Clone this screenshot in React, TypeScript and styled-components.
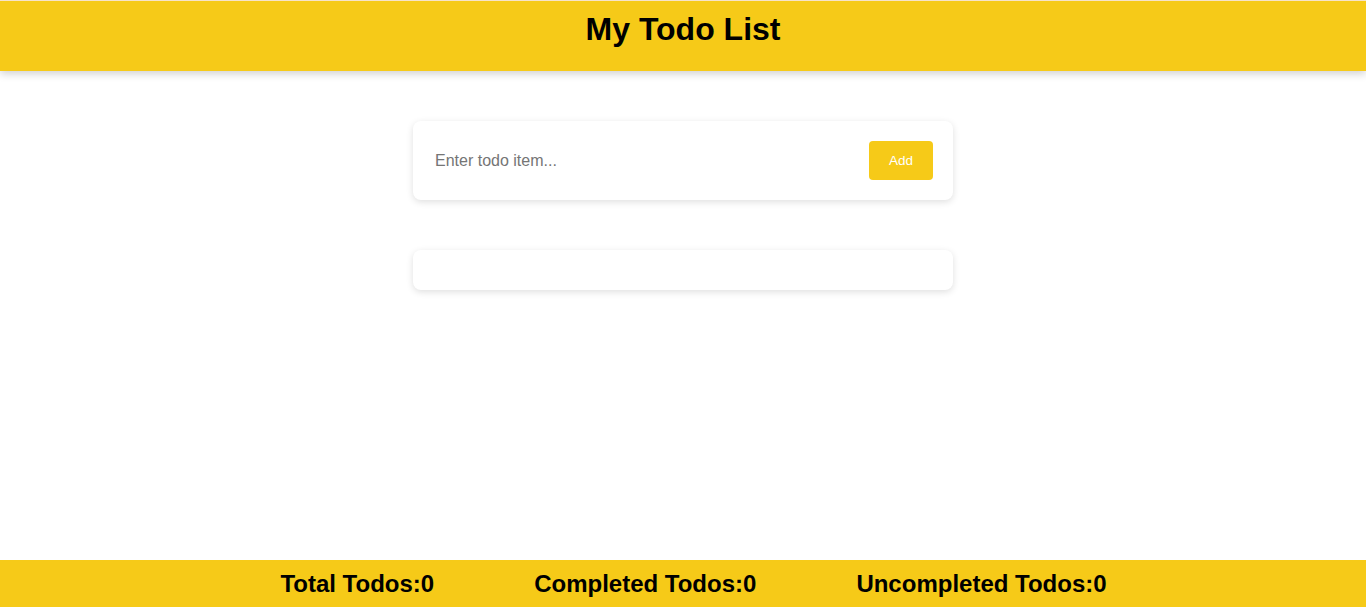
import React, { useState } from "react";
import styled, { createGlobalStyle } from "styled-components";

const YELLOW = "#f6ca18";

const GlobalStyle = createGlobalStyle`
  html, body {
    margin: 0;
    padding: 0;
    background: #ffffff;
    font-family: "Liberation Sans", Arial, sans-serif;
  }
  * { box-sizing: border-box; }
`;

const Page = styled.div`
  display: flex;
  flex-direction: column;
  min-height: 100vh;
`;

const Header = styled.header`
  height: 71px;
  background: ${YELLOW};
  border-top: 1px solid #f7e3c9;
  box-shadow: 0 3px 8px rgba(0, 0, 0, 0.18);
  display: flex;
  justify-content: center;
  padding-top: 10px;
`;

const Title = styled.h1`
  margin: 0;
  font-size: 32px;
  font-weight: 700;
  color: #000;
  line-height: 37px;
`;

const Main = styled.main`
  flex: 1;
  display: flex;
  flex-direction: column;
  align-items: center;
  gap: 50px;
  padding-top: 50px;
`;

const Card = styled.div`
  width: 540px;
  background: #fff;
  border-radius: 8px;
  box-shadow: 0 2px 7px rgba(0, 0, 0, 0.13);
`;

const FormCard = styled(Card)`
  display: flex;
  align-items: center;
  padding: 20px 20px 20px 22px;
  gap: 16px;
`;

const ListCard = styled(Card)`
  height: 40px;
`;

const Input = styled.input`
  flex: 1;
  border: none;
  outline: none;
  font-family: "Liberation Sans", Arial, sans-serif;
  font-size: 16px;
  color: #333;
  padding: 0;
  background: transparent;
  &::placeholder {
    color: #757575;
  }
`;

const AddButton = styled.button`
  width: 64px;
  height: 39px;
  border: none;
  border-radius: 4px;
  background: ${YELLOW};
  color: #fff;
  font-family: "Liberation Sans", Arial, sans-serif;
  font-size: 13.5px;
  cursor: pointer;
`;

const Footer = styled.footer`
  height: 47px;
  background: ${YELLOW};
  display: flex;
  justify-content: center;
  align-items: center;
  gap: 100px;
  padding-left: 21px;
`;

const Stat = styled.span`
  font-size: 24px;
  font-weight: 700;
  color: #000;
`;

export default function App() {
  const [value, setValue] = useState("");
  return (
    <>
      <GlobalStyle />
      <Page>
        <Header>
          <Title>My Todo List</Title>
        </Header>
        <Main>
          <FormCard>
            <Input
              placeholder="Enter todo item..."
              value={value}
              onChange={(e) => setValue(e.target.value)}
            />
            <AddButton>Add</AddButton>
          </FormCard>
          <ListCard />
        </Main>
        <Footer>
          <Stat>Total Todos:0</Stat>
          <Stat>Completed Todos:0</Stat>
          <Stat>Uncompleted Todos:0</Stat>
        </Footer>
      </Page>
    </>
  );
}
